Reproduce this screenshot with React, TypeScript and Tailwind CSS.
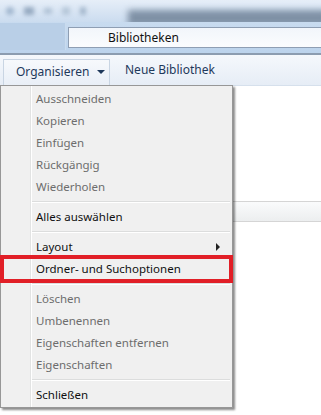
type Item = { label: string; disabled?: boolean; sub?: boolean } | "sep";

const items: Item[] = [
  { label: "Ausschneiden", disabled: true },
  { label: "Kopieren", disabled: true },
  { label: "Einfügen", disabled: true },
  { label: "Rückgängig", disabled: true },
  { label: "Wiederholen", disabled: true },
  "sep",
  { label: "Alles auswählen" },
  "sep",
  { label: "Layout", sub: true },
  { label: "Ordner- und Suchoptionen" },
  "sep",
  { label: "Löschen", disabled: true },
  { label: "Umbenennen", disabled: true },
  { label: "Eigenschaften entfernen", disabled: true },
  { label: "Eigenschaften", disabled: true },
  "sep",
  { label: "Schließen" },
];

function MenuRow({ item }: { item: Item }) {
  if (item === "sep") {
    return (
      <div className="h-[8px] flex items-center pl-[31px] pr-[2px]">
        <div className="w-full h-[2px] border-t border-[#dcdddd] border-b border-b-white" />
      </div>
    );
  }
  return (
    <div
      className={`h-[22px] flex items-center pl-[35px] pr-[12px] text-[11.5px] ${
        item.disabled ? "text-[#6d6d6d]" : "text-[#111]"
      }`}
    >
      <span className="flex-1">{item.label}</span>
      {item.sub && (
        <span className="w-0 h-0 border-y-[4px] border-y-transparent border-l-[4px] border-l-[#222]" />
      )}
    </div>
  );
}

export default function App() {
  return (
    <div
      className="w-[321px] h-[415px] overflow-hidden bg-white flex flex-col"
      style={{ fontFamily: '"Noto Sans", "Open Sans", sans-serif' }}
    >
      {/* blurred title bar */}
      <div className="h-[22px] flex bg-gradient-to-b from-[#e6eef8] to-[#cbdcef] overflow-hidden">
        <div className="w-[128px] flex items-center gap-[10px] pl-[6px] blur-[2px] opacity-70">
          <span className="w-[8px] h-[8px] bg-[#8aa3bf] rounded-sm" />
          <span className="w-[10px] h-[8px] bg-[#7b92ad]" />
          <span className="w-[8px] h-[6px] bg-[#9fb3c9]" />
          <span className="w-[8px] h-[8px] bg-[#a9bccf]" />
          <span className="w-[6px] h-[8px] bg-[#8fa5bd]" />
        </div>
        <div className="flex-1 mt-[10px] h-[16px] bg-[#7f91a6] blur-[3px] -mr-[6px]" />
      </div>

      {/* address row */}
      <div className="h-[33px] flex bg-gradient-to-b from-[#c8dbef] to-[#bcd3ec] border-b-2 border-[#8c9cb0]">
        <div className="w-[66px] mt-[1px] mb-[3px] bg-[#b9cfe7] border-r border-[#c9dbee]" />
        <div className="flex-1 mt-[5px] mb-[5px] ml-[2px] bg-gradient-to-b from-[#f2f6fb] to-[#fbfcfe] border border-[#8e9eb3] border-r-0 flex items-center pl-[39px] text-[12px] text-[#111]">
          Bibliotheken
        </div>
      </div>

      {/* toolbar */}
      <div className="h-[31px] flex items-center bg-gradient-to-b from-[#f5f8fc] to-[#e6edf6] border-b border-[#d6e0ec] text-[12px] text-[#1e395b]">
        <div className="ml-[3px] mt-[3px] h-[26px] w-[107px] flex items-center pl-[12px] gap-[8px] border border-[#c9d5e3] border-b-0 bg-gradient-to-b from-[#f7f9fc] to-[#e9eff7]">
          <span>Organisieren</span>
          <span className="w-0 h-0 border-x-[4px] border-x-transparent border-t-[4px] border-t-[#1e395b]" />
        </div>
        <span className="ml-[15px]">Neue Bibliothek</span>
      </div>

      {/* content */}
      <div className="flex-1 flex">
        <div className="relative z-10 w-[233px] h-[323px] -mt-[1px] bg-[#f0f0f0] border border-[#979797] pt-[2px] shadow-[2px_2px_2px_rgba(0,0,0,0.45)]">
          <div className="absolute left-[29px] top-0 bottom-0 w-[2px] border-l border-[#e2e3e3] border-r border-r-white" />
          {items.map((it, i) => (
            <MenuRow key={i} item={it} />
          ))}
          <div className="absolute -left-[1px] top-[169px] w-[233px] h-[28px] border-[4px] border-[#e11f27]" />
        </div>
        <div className="flex-1 flex flex-col">
          <div className="mt-[115px] h-[21px] bg-gradient-to-b from-[#fafbfc] to-[#eceeef] border-y border-[#d5d5d5]" />
        </div>
      </div>
    </div>
  );
}
